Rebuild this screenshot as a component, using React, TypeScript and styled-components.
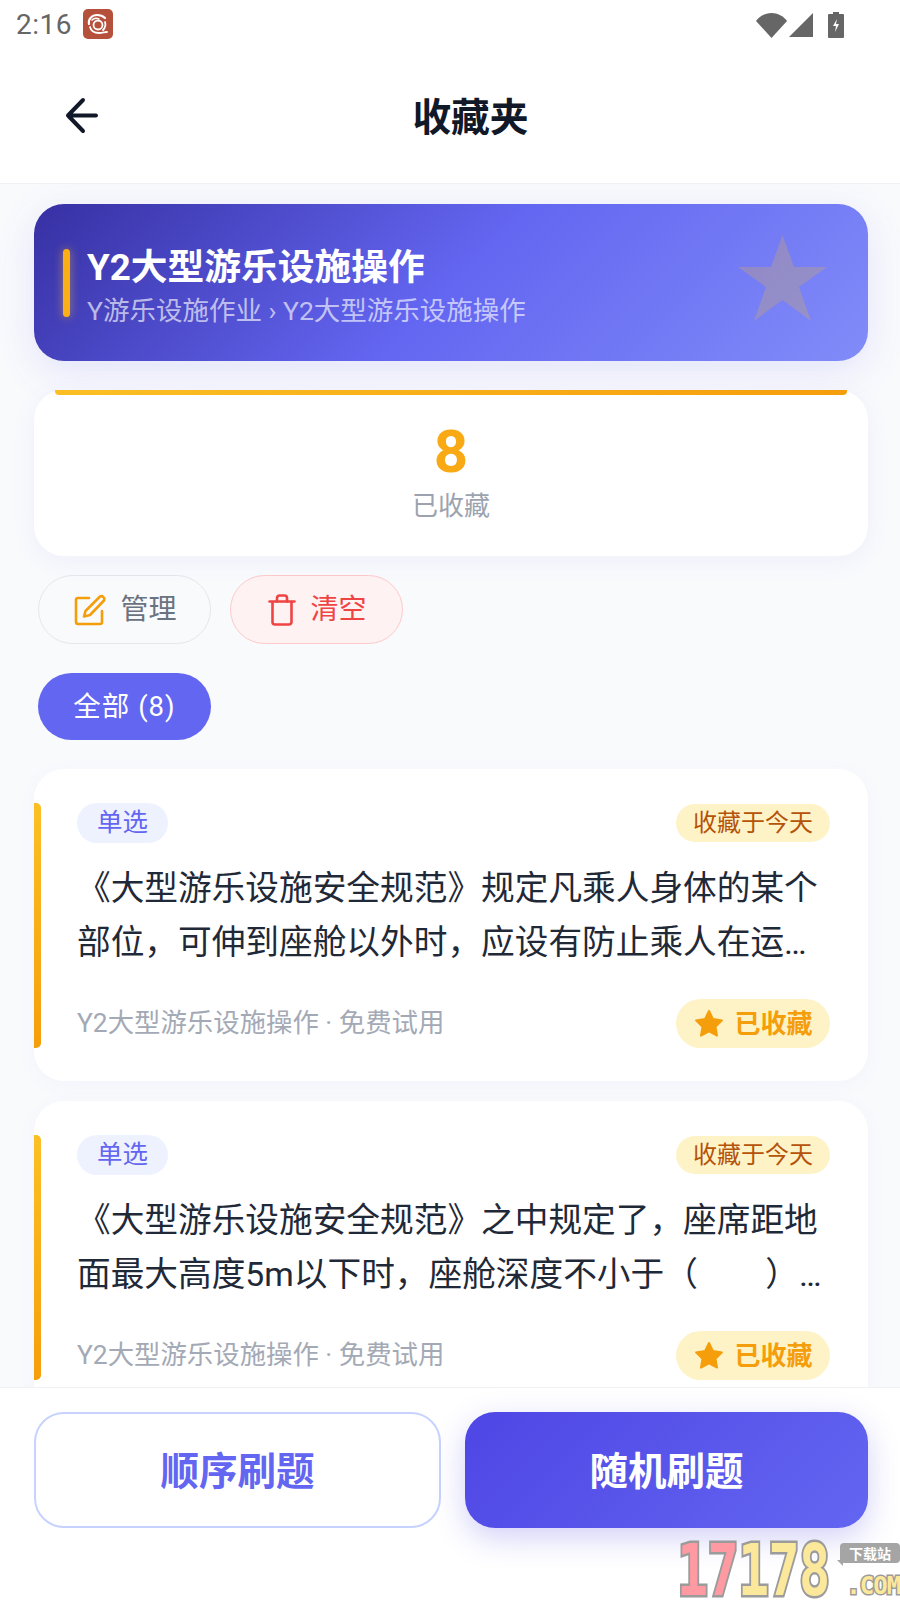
import React from "react";
import styled, { createGlobalStyle } from "styled-components";

const GlobalStyle = createGlobalStyle`
  html, body {
    margin: 0;
    padding: 0;
    background: #fff;
    font-family: Roboto, "Noto Sans CJK SC", sans-serif;
  }
  * { box-sizing: border-box; }
`;

const Page = styled.div`
  width: 900px;
  height: 1600px;
  display: flex;
  flex-direction: column;
  position: relative;
  overflow: hidden;
  background: #f9fafc;
`;

const TopArea = styled.header`
  height: 184px;
  flex: none;
  background: #fff;
  border-bottom: 1px solid #f0f1f4;
`;

const StatusBar = styled.div`
  height: 50px;
  display: flex;
  align-items: center;
  padding: 0 56px 0 16px;
`;

const Clock = styled.span`
  font-size: 28px;
  line-height: 50px;
  color: #666;
  letter-spacing: 0.5px;
`;

const AppIcon = styled.svg`
  width: 30px;
  height: 30px;
  margin-left: 11px;
  margin-top: -2px;
`;

const StatusIcons = styled.div`
  margin-left: auto;
  display: flex;
  align-items: center;
  gap: 2px;
`;

const NavBar = styled.div`
  height: 133px;
  display: flex;
  align-items: center;
  padding: 0 0 0 60px;
`;

const BackButton = styled.svg`
  width: 44px;
  height: 44px;
  flex: none;
`;

const NavTitle = styled.h1`
  flex: 1;
  margin: 0;
  padding: 4px 63px 0 0;
  text-align: center;
  font-size: 38.75px;
  font-weight: 700;
  color: #111827;
  line-height: 1;
`;

const Content = styled.main`
  flex: 1;
  min-height: 0;
  overflow: hidden;
  padding: 20px 32px 0 34px;
  display: flex;
  flex-direction: column;
`;

const Banner = styled.section`
  position: relative;
  flex: none;
  height: 157px;
  border-radius: 30px;
  background: linear-gradient(135deg, #3730a3 0%, #6366f1 50%, #818cf8 100%);
  box-shadow: 0 10px 38px rgba(99, 102, 241, 0.15);
  display: flex;
  align-items: center;
  padding: 0 0 0 29px;
  gap: 17px;
`;

const BannerBar = styled.div`
  width: 7px;
  height: 68px;
  border-radius: 4px;
  background: #fbaf17;
  box-shadow: 0 0 10px rgba(251, 191, 36, 0.5);
`;

const BannerText = styled.div`
  margin-top: 8px;
`;

const BannerTitle = styled.div`
  font-size: 36.75px;
  font-weight: 700;
  color: #fff;
  line-height: 44px;
`;

const BannerPath = styled.div`
  font-size: 26.5px;
  line-height: 34px;
  color: rgba(255, 255, 255, 0.65);
  margin-top: 4px;
`;

const BannerStar = styled.svg`
  position: absolute;
  right: 41px;
  top: 31px;
  width: 89px;
  height: 86px;
`;

const StatCard = styled.section`
  position: relative;
  flex: none;
  height: 166px;
  margin-top: 29px;
  border-radius: 30px;
  background: #fff;
  box-shadow: 0 5px 25px rgba(99, 102, 241, 0.07);
  display: flex;
  flex-direction: column;
  align-items: center;
  padding-top: 27px;

  &::before {
    content: "";
    position: absolute;
    top: 0;
    left: 21px;
    right: 21px;
    height: 5px;
    border-radius: 0 0 4px 4px;
    background: linear-gradient(90deg, #fbbf24, #f59e0b);
  }
`;

const StatValue = styled.div`
  font-size: 60px;
  line-height: 70px;
  font-weight: 700;
  color: #f9a914;
`;

const StatLabel = styled.div`
  font-size: 26px;
  line-height: 30px;
  margin-top: 4px;
  color: #9ca3af;
`;

const Actions = styled.div`
  flex: none;
  display: flex;
  gap: 19px;
  margin: 19px 0 0 4px;
`;

const ActionButton = styled.button<{ $danger?: boolean }>`
  width: 173px;
  height: 69px;
  border-radius: 35px;
  border: 1px solid ${(p) => (p.$danger ? "#fecaca" : "#e5e7eb")};
  background: ${(p) => (p.$danger ? "#fef2f2" : "transparent")};
  color: ${(p) => (p.$danger ? "#ef4444" : "#6b7280")};
  font-family: inherit;
  font-size: 28px;
  line-height: 1;
  display: flex;
  align-items: center;
  justify-content: center;
  gap: 14px;
  padding: 0 0 0 2px;
`;

const Filters = styled.div`
  flex: none;
  display: flex;
  margin: 29px 0 0 4px;
`;

const FilterChip = styled.div`
  width: 173px;
  height: 67px;
  border-radius: 34px;
  background: #6366f1;
  color: #fff;
  font-size: 27.5px;
  line-height: 1;
  letter-spacing: 1px;
  display: flex;
  align-items: center;
  justify-content: center;
`;

const QuestionCard = styled.article`
  position: relative;
  flex: none;
  height: 312px;
  margin-top: 29px;
  margin-bottom: -9px;
  border-radius: 30px;
  background: #fff;
  box-shadow: 0 4px 20px rgba(99, 102, 241, 0.04);
  padding: 34px 38px 33px 43px;
  display: flex;
  flex-direction: column;

  &::before {
    content: "";
    position: absolute;
    left: 0;
    top: 34px;
    bottom: 33px;
    width: 7px;
    border-radius: 0 5px 5px 0;
    background: linear-gradient(180deg, #fbbf24, #f59e0b);
  }
`;

const CardHead = styled.div`
  display: flex;
  align-items: center;
  justify-content: space-between;
  height: 40px;
`;

const TypeTag = styled.span`
  width: 91px;
  height: 40px;
  border-radius: 20px;
  background: #eef2ff;
  color: #6366f1;
  font-size: 25.5px;
  line-height: 1;
  display: flex;
  align-items: center;
  justify-content: center;
`;

const DateTag = styled.span`
  width: 154px;
  height: 38px;
  border-radius: 19px;
  background: #fef3c7;
  color: #b45309;
  font-size: 24px;
  line-height: 1;
  display: flex;
  align-items: center;
  justify-content: center;
`;

const QuestionText = styled.p`
  margin: 19px 0 0;
  height: 108px;
  font-size: 33.68px;
  line-height: 54px;
  color: #1f2937;
`;

const CardFoot = styled.div`
  margin-top: auto;
  display: flex;
  align-items: center;
  justify-content: space-between;
`;

const MetaText = styled.span`
  font-size: 26.4px;
  line-height: 1;
  color: #a3a9b5;
`;

const SavedBadge = styled.span`
  width: 154px;
  height: 49px;
  border-radius: 25px;
  background: #fef3c7;
  color: #f59e0b;
  font-size: 26px;
  font-weight: 700;
  line-height: 1;
  display: flex;
  align-items: center;
  justify-content: center;
  gap: 9px;
`;

const BottomBar = styled.footer`
  flex: none;
  height: 213px;
  position: relative;
  background: #fff;
  border-top: 1px solid #f0f1f4;
  padding: 24px 32px 0 34px;
  display: grid;
  grid-template-columns: 407px 403px;
  grid-template-rows: 116px;
  gap: 24px;
`;

const StudyButton = styled.button<{ $primary?: boolean }>`
  border-radius: 30px;
  font-family: inherit;
  font-size: 38.5px;
  font-weight: 700;
  line-height: 1;
  padding: 5px 0 0;
  border: ${(p) => (p.$primary ? "none" : "2.5px solid #c7d2fe")};
  color: ${(p) => (p.$primary ? "#fff" : "#6366f1")};
  background: ${(p) => (p.$primary ? "linear-gradient(135deg, #4f46e5, #6366f1)" : "#fff")};
  box-shadow: ${(p) => (p.$primary ? "0 10px 30px rgba(79, 70, 229, 0.25)" : "none")};
`;

const Watermark = styled.div`
  position: absolute;
  right: 0;
  bottom: 0;
  width: 223px;
  height: 60px;
  display: flex;
  font-family: "DejaVu Sans Mono", monospace;
  font-weight: 700;
`;

const WatermarkNumber = styled.div`
  width: 156px;
  flex: none;
  white-space: nowrap;
  transform: scaleX(0.72);
  transform-origin: left center;
  line-height: 60px;
`;

const WatermarkDigits = styled.span<{ $pink?: boolean }>`
  font-size: 72px;
  letter-spacing: -1px;
  color: ${(p) => (p.$pink ? "#ff9aa2" : "#fbe89a")};
  -webkit-text-stroke: 5px #9b9b9b;
  paint-order: stroke fill;
`;

const WatermarkSide = styled.div`
  flex: 1;
  min-width: 0;
  display: flex;
  flex-direction: column;
  align-items: flex-end;
`;

const WatermarkBubble = styled.span`
  position: relative;
  width: 60px;
  height: 20px;
  margin-top: 3px;
  border-radius: 4px;
  background: #a5a5a5;
  color: #fff;
  font-family: "Noto Sans CJK SC", sans-serif;
  font-size: 14px;
  font-weight: 700;
  line-height: 20px;
  text-align: center;

  &::after {
    content: "";
    position: absolute;
    left: -3px;
    bottom: -3px;
    border-top: 6px solid #a5a5a5;
    border-left: 6px solid transparent;
  }
`;

const WatermarkCom = styled.span`
  margin-top: 11px;
  font-size: 25px;
  line-height: 24px;
  white-space: nowrap;
  letter-spacing: -1px;
  color: #fbe89a;
  -webkit-text-stroke: 3px #9b9b9b;
  paint-order: stroke fill;
  transform: scaleX(0.96);
  transform-origin: right center;
`;

const TagStar = () => (
  <svg width="32" height="32" viewBox="0 0 24 24" fill="#f59e0b" stroke="#f59e0b" strokeWidth="1.5" strokeLinejoin="round">
    <path d="M12 2.200l3 6.100 6.700 1-4.800 4.700 1.100 6.700-6-3.100-6 3.100 1.100-6.700-4.800-4.700 6.700-1z" />
  </svg>
);

// previews are already cut to two lines
const questions = [
  "《大型游乐设施安全规范》规定凡乘人身体的某个部位，可伸到座舱以外时，应设有防止乘人在运…",
  "《大型游乐设施安全规范》之中规定了，座席距地面最大高度5m以下时，座舱深度不小于（　　）…",
];

const App = () => {
  return (
    <>
      <GlobalStyle />
      <Page>
        <TopArea>
          <StatusBar>
            <Clock>2:16</Clock>
            <AppIcon viewBox="0 0 30 30">
              <rect width="30" height="30" rx="5" fill="#b5503a" />
              <g fill="none" stroke="#fff" strokeLinecap="round">
                <path d="M6 15c-1-5 3-9 8-9 3 0 6 1 8 3" strokeWidth="2.2" />
                <path d="M9 11c2-2 5-2 7-1" strokeWidth="1.6" />
                <circle cx="15" cy="16" r="4.500" strokeWidth="1.8" />
                <path d="M7 18c1 4 5 6 9 6 3 0 6-1 8-1" strokeWidth="1.8" />
                <path d="M22 13c1 3 0 6-2 8" strokeWidth="1.8" />
              </g>
            </AppIcon>
            <StatusIcons>
              <svg width="31" height="25" viewBox="0 0 31 25">
                <path d="M0 8C3.500 3 9.500 0 15.500 0S27.500 3 31 8L15.500 25z" fill="#666" />
              </svg>
              <svg width="24" height="24" viewBox="0 0 24 24">
                <path d="M24 0v24H0z" fill="#666" />
              </svg>
              <svg width="16" height="26" viewBox="0 0 16 26" style={{ marginLeft: 13 }}>
                <path d="M5 0h6v2h4a1 1 0 0 1 1 1v22a1 1 0 0 1-1 1H1a1 1 0 0 1-1-1V3a1 1 0 0 1 1-1h4z" fill="#666" />
                <path d="M9 7l-4 7h3l-1 6 4-8H8z" fill="#fff" />
              </svg>
            </StatusIcons>
          </StatusBar>
          <NavBar>
            <BackButton viewBox="0 0 44 44" fill="none" stroke="#111827" strokeWidth="4" strokeLinecap="round" strokeLinejoin="round">
              <path d="M36 20.500H8M23 5L8 20.500 23 36" />
            </BackButton>
            <NavTitle>收藏夹</NavTitle>
          </NavBar>
        </TopArea>
        <Content>
          <Banner>
            <BannerBar />
            <BannerText>
              <BannerTitle>Y2大型游乐设施操作</BannerTitle>
              <BannerPath>Y游乐设施作业 › Y2大型游乐设施操作</BannerPath>
            </BannerText>
            <BannerStar viewBox="0 0 89 86">
              <path d="M44.500 0L56 32H89L61 52 73 86 44.500 65 16 86 28 52 0 32H33z" fill="#fbbf24" fillOpacity="0.22" />
            </BannerStar>
          </Banner>
          <StatCard>
            <StatValue>8</StatValue>
            <StatLabel>已收藏</StatLabel>
          </StatCard>
          <Actions>
            <ActionButton>
              <svg width="32" height="32" viewBox="0 0 32 32" fill="none" stroke="#f59e0b" strokeWidth="2.6" strokeLinecap="round" strokeLinejoin="round">
                <path d="M15 4H4a2 2 0 0 0-2 2v22a2 2 0 0 0 2 2h22a2 2 0 0 0 2-2V17" />
                <path d="M26 2.500a3 3 0 0 1 4 4L16 21l-6 1.500L11.500 17z" />
              </svg>
              管理
            </ActionButton>
            <ActionButton $danger>
              <svg width="28" height="32" viewBox="0 0 28 32" fill="none" stroke="#ef4444" strokeWidth="2.6" strokeLinecap="round" strokeLinejoin="round">
                <path d="M1.500 7.500h25M4.500 7.500V28a2.500 2.500 0 0 0 2.500 2.500h14a2.500 2.500 0 0 0 2.500-2.500V7.500" />
                <path d="M9 7.500V4a2.500 2.500 0 0 1 2.500-2.500h5A2.500 2.500 0 0 1 19 4v3.500" />
              </svg>
              清空
            </ActionButton>
          </Actions>
          <Filters>
            <FilterChip>全部 (8)</FilterChip>
          </Filters>
          {questions.map((q, i) => (
            <QuestionCard key={i}>
              <CardHead>
                <TypeTag>单选</TypeTag>
                <DateTag>收藏于今天</DateTag>
              </CardHead>
              <QuestionText>{q}</QuestionText>
              <CardFoot>
                <MetaText>Y2大型游乐设施操作 · 免费试用</MetaText>
                <SavedBadge>
                  <TagStar />
                  已收藏
                </SavedBadge>
              </CardFoot>
            </QuestionCard>
          ))}
        </Content>
        <BottomBar>
          <StudyButton>顺序刷题</StudyButton>
          <StudyButton $primary>随机刷题</StudyButton>
        </BottomBar>
        <Watermark>
          <WatermarkNumber>
            <WatermarkDigits $pink>17</WatermarkDigits>
            <WatermarkDigits>178</WatermarkDigits>
          </WatermarkNumber>
          <WatermarkSide>
            <WatermarkBubble>下载站</WatermarkBubble>
            <WatermarkCom>.COM</WatermarkCom>
          </WatermarkSide>
        </Watermark>
      </Page>
    </>
  );
};

export default App;
